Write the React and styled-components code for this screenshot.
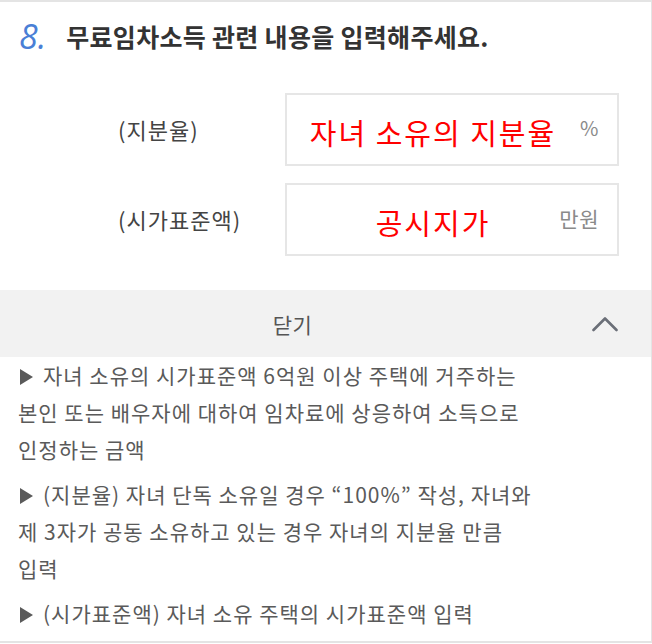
import React from 'react';
import styled, { createGlobalStyle } from 'styled-components';

const GlobalStyle = createGlobalStyle`
    body {
        margin: 0;
        background: #ffffff;
        font-family: "Noto Sans CJK KR", "Noto Sans", sans-serif;
    }
`;

const Frame = styled.div`
    width: 651px;
    height: 639px;
    border-top: 2px solid #e4e4e4;
    border-right: 1px solid #e4e4e4;
    border-bottom: 2px solid #e4e4e4;
    background: #ffffff;
    display: flex;
    flex-direction: column;
`;

const Header = styled.div`
    height: 68px;
    display: flex;
    align-items: center;
    padding-left: 19px;
    gap: 20px;
`;

const Number = styled.span`
    font-family: "Open Sans", Roboto, sans-serif;
    font-style: italic;
    font-weight: 400;
    font-size: 34px;
    color: #4a7fd6;
    line-height: 1;
`;

const Title = styled.h2`
    margin: 0;
    font-size: 25px;
    font-weight: 700;
    color: #333333;
    letter-spacing: 0.3px;
`;

const Form = styled.div`
    display: flex;
    flex-direction: column;
    gap: 17px;
    padding: 23px 0 34px;
`;

const Row = styled.div`
    display: flex;
    align-items: center;
`;

const Label = styled.span`
    flex: 0 0 285px;
    padding-left: 118px;
    box-sizing: border-box;
    white-space: nowrap;
    font-size: 22px;
    letter-spacing: 1px;
    color: #444444;
    padding-bottom: 2px;
`;

const Box = styled.div`
    width: 334px;
    height: 73px;
    box-sizing: border-box;
    border: 2px solid #e6e6e6;
    display: flex;
    align-items: center;
    padding: 0 18px 0 22px;
`;

const Value = styled.span`
    flex: 1;
    text-align: center;
    font-size: 29px;
    letter-spacing: 2px;
    color: #ff0000;
    padding-top: 4px;
`;

const Unit = styled.span`
    width: 42px;
    text-align: right;
    font-size: ${(props) => (props.small ? '20px' : '21px')};
    letter-spacing: 0.5px;
    color: #8a8a8a;
    padding-bottom: 4px;
`;

const Toggle = styled.div`
    height: 67px;
    background: #f2f2f2;
    display: flex;
    align-items: center;
`;

const ToggleLabel = styled.span`
    flex: 1;
    text-align: center;
    font-size: 21px;
    letter-spacing: 0.5px;
    color: #555555;
    padding-left: 4px;
`;

const Chevron = styled.div`
    width: 70px;
    box-sizing: border-box;
    display: flex;
    padding-left: 11px;
`;

const Notes = styled.div`
    padding: 0 0 0 18px;
    display: flex;
    flex-direction: column;
    gap: 8px;
`;

const Note = styled.p`
    margin: 0;
    font-size: 21px;
    line-height: 37px;
    color: #5a5a5a;
    letter-spacing: 1px;
`;

const Arrow = styled.span`
    display: inline-block;
    width: 0;
    height: 0;
    border-top: 8px solid transparent;
    border-bottom: 8px solid transparent;
    border-left: 13px solid #5a5a5a;
    margin: 0 10px 0 2px;
    vertical-align: -1px;
`;

function App() {
    return (
        <>
            <GlobalStyle />
            <Frame>
                <Header>
                    <Number>8.</Number>
                    <Title>무료임차소득 관련 내용을 입력해주세요.</Title>
                </Header>

                <Form>
                    <Row>
                        <Label>(지분율)</Label>
                        <Box>
                            <Value>자녀 소유의 지분율</Value>
                            <Unit small>%</Unit>
                        </Box>
                    </Row>
                    <Row>
                        <Label>(시가표준액)</Label>
                        <Box>
                            <Value>공시지가</Value>
                            <Unit>만원</Unit>
                        </Box>
                    </Row>
                </Form>

                <Toggle>
                    <ToggleLabel>닫기</ToggleLabel>
                    <Chevron>
                        <svg width="26" height="16" viewBox="0 0 26 16">
                            <path d="M1.5 14 L13 2.5 L24.5 14" fill="none" stroke="#6b6f78" strokeWidth="2.6" strokeLinecap="round" strokeLinejoin="round" />
                        </svg>
                    </Chevron>
                </Toggle>

                <Notes>
                    <Note>
                        <Arrow />자녀 소유의 시가표준액 6억원 이상 주택에 거주하는<br />
                        본인 또는 배우자에 대하여 임차료에 상응하여 소득으로<br />
                        인정하는 금액
                    </Note>
                    <Note>
                        <Arrow />(지분율) 자녀 단독 소유일 경우 “100%” 작성, 자녀와<br />
                        제 3자가 공동 소유하고 있는 경우 자녀의 지분율 만큼<br />
                        입력
                    </Note>
                    <Note>
                        <Arrow />(시가표준액) 자녀 소유 주택의 시가표준액 입력
                    </Note>
                </Notes>
            </Frame>
        </>
    );
}

export default App;
